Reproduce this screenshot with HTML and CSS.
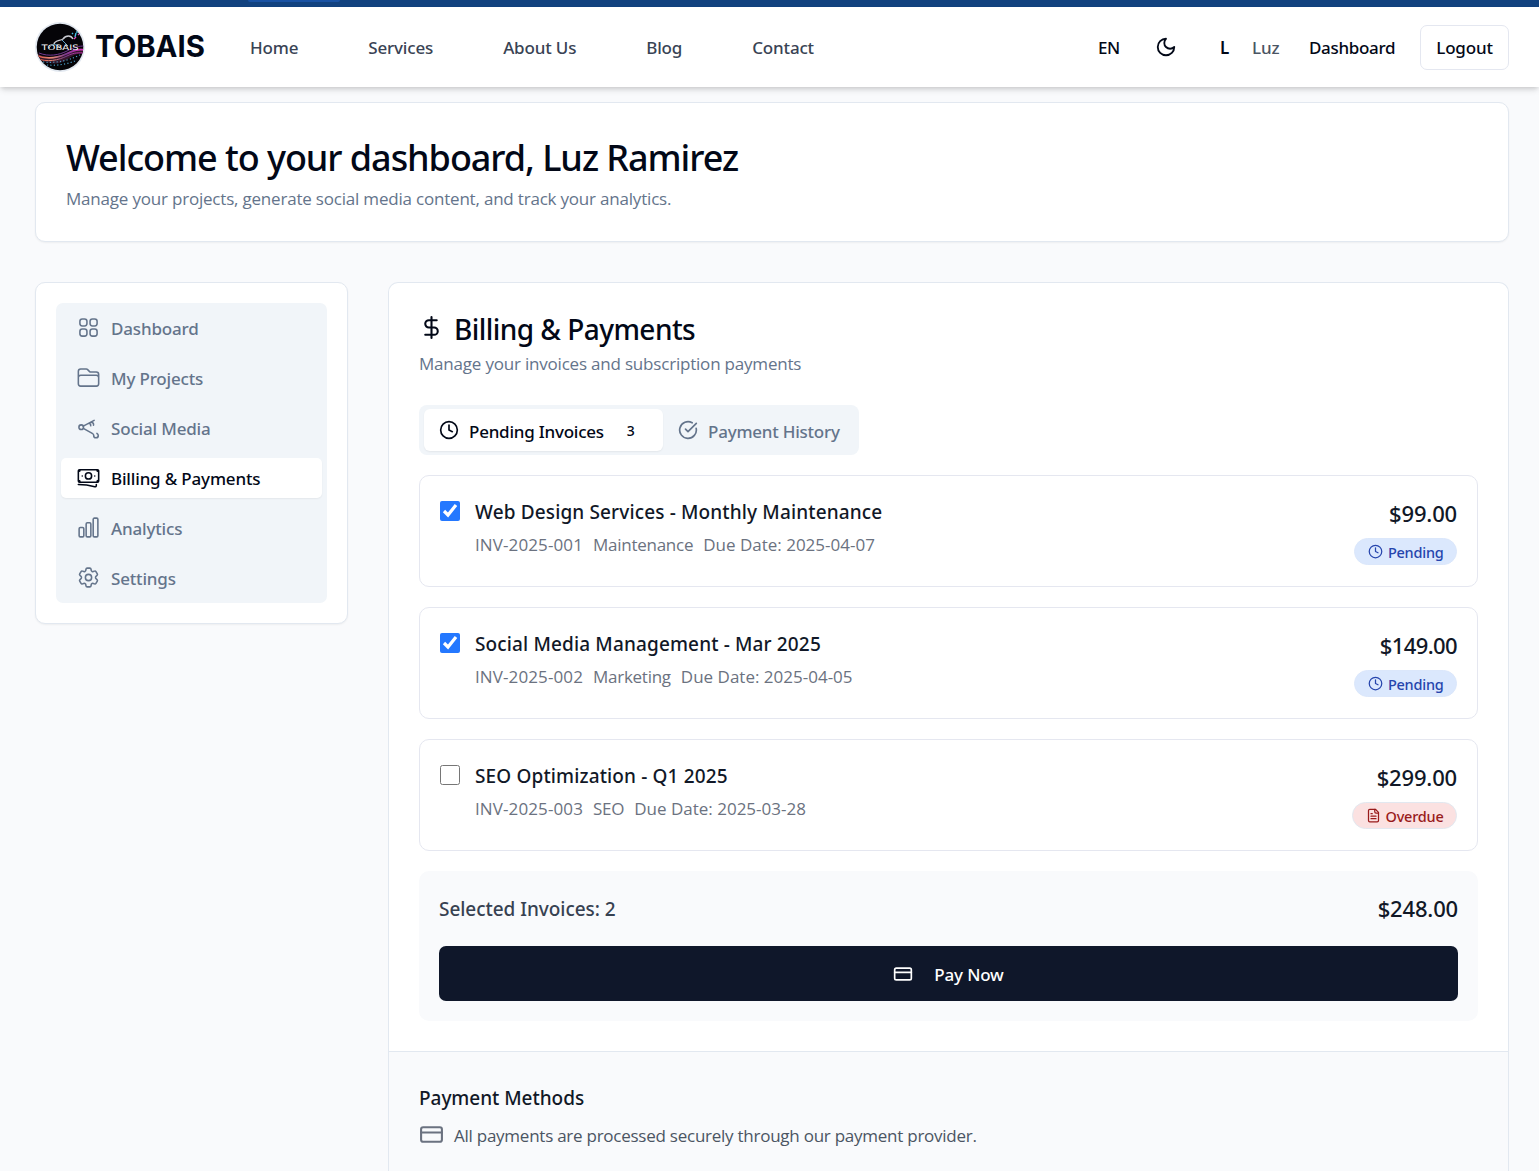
FILE: index.html
```html
<!DOCTYPE html>
<html lang="en">
<head>
<meta charset="utf-8">
<title>Dashboard - Billing &amp; Payments</title>
<link rel="stylesheet" href="styles.css">
</head>
<body>
<svg class="sprite" aria-hidden="true">
  <symbol id="i-clock" viewBox="0 0 24 24"><circle cx="12" cy="12" r="10"/><path d="M12 6v6l4 2"/></symbol>
  <symbol id="i-card" viewBox="0 0 24 24"><rect x="2" y="5" width="20" height="14" rx="2"/><path d="M2 10h20"/></symbol>
</svg>
<div class="topbar"><span class="topbar-pill"></span></div>
<header class="header">
  <a class="brand">
    <svg class="logo" viewBox="0 0 50 50">
      <defs>
        <clipPath id="disc"><circle cx="25" cy="25" r="23.3"/></clipPath>
        <linearGradient id="wave" x1="0" x2="1"><stop offset="0" stop-color="#d8503c"/><stop offset=".35" stop-color="#e58a78"/><stop offset=".6" stop-color="#7a3a8e"/><stop offset="1" stop-color="#e22bc0"/></linearGradient>
      </defs>
      <circle cx="25" cy="25" r="25" fill="#e2e8f0"/>
      <g clip-path="url(#disc)" fill="none">
        <rect width="50" height="50" fill="#050408"/>
        <path d="M0 29C10 39 22 35 31 31S44 25 50 27V31C40 30 36 36 27 40S8 39 0 36Z" fill="#35182c"/>
        <path d="M0 33C12 38 22 36 31 32S43 27 50 28" stroke="url(#wave)" stroke-width="1.6"/>
        <path d="M1 36C12 41 24 38 32 34S43 31 50 31" stroke="url(#wave)" stroke-width="1"/>
        <path d="M4 31C14 35 24 33 32 29S43 24 50 24" stroke="#7d3fa0" stroke-width=".9"/>
        <path d="M8 40C20 41 30 40 45 33M12 43C22 44 34 42 42 38" stroke="#4b9cc4" stroke-width="1.2" stroke-dasharray="1.2 2.2"/>
        <path d="M19 22C20 18 25 19 28 17C31 13 36 13 38 17" stroke="#c9cbd2" stroke-width="1.5"/>
        <path d="M14 26C17 21 22 22 25 26M27 18L33 24" stroke="#5fa5c8" stroke-width="1"/>
        <path d="M37 12l1-1M40 15l1-4M42 11v-2" stroke="#45c1e8" stroke-width="1.4"/>
        <path d="M39 17l2-2M43 13l1-1" stroke="#e04bbd" stroke-width="1.3"/>
      </g>
      <text class="logo-text" x="6.5" y="28" textLength="37" lengthAdjust="spacingAndGlyphs">TOBAIS</text>
    </svg>
    <span class="brand-name">TOBAIS</span>
  </a>
  <nav class="nav"><a>Home</a><a>Services</a><a>About Us</a><a>Blog</a><a>Contact</a></nav>
  <div class="actions">
    <span class="lang">EN</span>
    <svg class="icon moon" viewBox="0 0 24 24"><path d="M12 3a6 6 0 0 0 9 9 9 9 0 1 1-9-9Z"/></svg>
    <span class="initial">L</span>
    <span class="user">Luz</span>
    <a class="dash">Dashboard</a>
    <button class="logout">Logout</button>
  </div>
</header>

<div class="page">
  <section class="card welcome">
    <h1>Welcome to your dashboard, Luz Ramirez</h1>
    <p>Manage your projects, generate social media content, and track your analytics.</p>
  </section>

  <div class="columns">
    <aside class="card sidebar">
      <div class="menu">
        <a class="item"><svg class="hero" viewBox="0 0 24 24"><path d="M3.75 6A2.25 2.25 0 0 1 6 3.75h2.25A2.25 2.25 0 0 1 10.5 6v2.25a2.25 2.25 0 0 1-2.25 2.25H6a2.25 2.25 0 0 1-2.25-2.25V6ZM3.75 15.75A2.25 2.25 0 0 1 6 13.5h2.25a2.25 2.25 0 0 1 2.25 2.25V18a2.25 2.25 0 0 1-2.25 2.25H6A2.25 2.25 0 0 1 3.75 18v-2.25ZM13.5 6a2.25 2.25 0 0 1 2.25-2.25H18A2.25 2.25 0 0 1 20.25 6v2.25A2.25 2.25 0 0 1 18 10.5h-2.25a2.25 2.25 0 0 1-2.25-2.25V6ZM13.5 15.75a2.25 2.25 0 0 1 2.25-2.25H18a2.25 2.25 0 0 1 2.25 2.25V18A2.25 2.25 0 0 1 18 20.25h-2.25A2.25 2.25 0 0 1 13.5 18v-2.25Z"/></svg>Dashboard</a>
        <a class="item"><svg class="hero" viewBox="0 0 24 24"><path d="M2.25 12.75V12A2.25 2.25 0 0 1 4.5 9.75h15A2.25 2.25 0 0 1 21.75 12v.75m-8.69-6.44-2.12-2.12a1.5 1.5 0 0 0-1.061-.44H4.5A2.25 2.25 0 0 0 2.25 6v12a2.25 2.25 0 0 0 2.25 2.25h15A2.25 2.25 0 0 0 21.75 18V9a2.25 2.25 0 0 0-2.25-2.25h-5.379a1.5 1.5 0 0 1-1.06-.44Z"/></svg>My Projects</a>
        <a class="item"><svg class="hero" viewBox="0 0 24 24"><circle cx="5" cy="11.7" r="2.2"/><path d="M7 10.700 17.400 5.200M7 12.800 15.600 17.600c1.500.8 1.400 1.300 1.400 2a2.200 2.200 0 0 0 4.400.2c0-1.100-.5-1.700-1.300-2.100M12.200 8.200c1.500-.3 2 .6 1.900 2.200M15 7.200c1.500 0 2.100 1 1.800 2.600"/></svg>Social Media</a>
        <a class="item active"><svg class="hero" viewBox="0 0 24 24"><path d="M2.25 18.75a60.07 60.07 0 0 1 15.797 2.101c.727.198 1.453-.342 1.453-1.096V18.750M3.750 4.500v.75A.75.75 0 0 1 3 6h-.75m0 0v-.375c0-.621.504-1.125 1.125-1.125H20.250M2.250 6v9m18-10.500v.75c0 .414.336.75.75.75h.75m-1.500-1.500h.375c.621 0 1.125.504 1.125 1.125v9.750c0 .621-.504 1.125-1.125 1.125h-.375m1.500-1.500H21a.75.75 0 0 0-.75.75v.75m0 0H3.750m0 0h-.375a1.125 1.125 0 0 1-1.125-1.125V15m1.500 1.500v-.75A.75.75 0 0 0 3 15h-.75M15 10.500a3 3 0 1 1-6 0 3 3 0 0 1 6 0Zm3 0h.008v.008H18V10.500Zm-12 0h.008v.008H6V10.500Z"/></svg>Billing &amp; Payments</a>
        <a class="item"><svg class="hero" viewBox="0 0 24 24"><path d="M3 13.125C3 12.504 3.504 12 4.125 12h2.250c.621 0 1.125.504 1.125 1.125v6.750C7.500 20.496 6.996 21 6.375 21h-2.250A1.125 1.125 0 0 1 3 19.875v-6.750ZM9.750 8.625c0-.621.504-1.125 1.125-1.125h2.250c.621 0 1.125.504 1.125 1.125v11.250c0 .621-.504 1.125-1.125 1.125h-2.250a1.125 1.125 0 0 1-1.125-1.125V8.625ZM16.500 4.125c0-.621.504-1.125 1.125-1.125h2.250C20.496 3 21 3.504 21 4.125v15.750c0 .621-.504 1.125-1.125 1.125h-2.250a1.125 1.125 0 0 1-1.125-1.125V4.125Z"/></svg>Analytics</a>
        <a class="item"><svg class="hero" viewBox="0 0 24 24"><path d="M9.594 3.940c.090-.542.560-.940 1.110-.940h2.593c.550 0 1.020.398 1.110.940l.213 1.281c.063.374.313.686.645.870.074.040.147.083.220.127.325.196.720.257 1.075.124l1.217-.456a1.125 1.125 0 0 1 1.370.490l1.296 2.247a1.125 1.125 0 0 1-.260 1.431l-1.003.827c-.293.241-.438.613-.430.992a7.723 7.723 0 0 1 0 .255c-.008.378.137.750.430.991l1.004.827c.424.350.534.955.260 1.430l-1.298 2.247a1.125 1.125 0 0 1-1.369.491l-1.217-.456c-.355-.133-.750-.072-1.076.124a6.470 6.470 0 0 1-.220.128c-.331.183-.581.495-.644.869l-.213 1.281c-.090.543-.560.940-1.110.940h-2.594c-.550 0-1.019-.398-1.110-.940l-.213-1.281c-.062-.374-.312-.686-.644-.870a6.520 6.520 0 0 1-.220-.127c-.325-.196-.720-.257-1.076-.124l-1.217.456a1.125 1.125 0 0 1-1.369-.490l-1.297-2.247a1.125 1.125 0 0 1 .260-1.431l1.004-.827c.292-.240.437-.613.430-.991a6.932 6.932 0 0 1 0-.255c.007-.380-.138-.751-.430-.992l-1.004-.827a1.125 1.125 0 0 1-.260-1.430l1.297-2.247a1.125 1.125 0 0 1 1.370-.491l1.216.456c.356.133.751.072 1.076-.124.072-.044.146-.086.220-.128.332-.183.582-.495.644-.869l.214-1.280Z"/><path d="M15 12a3 3 0 1 1-6 0 3 3 0 0 1 6 0Z"/></svg>Settings</a>
      </div>
    </aside>

    <main class="card main">
      <div class="content">
        <h2><svg class="icon dollar" viewBox="0 0 24 24"><path d="M12 2v20M17 5H9.500a3.500 3.500 0 0 0 0 7h5a3.500 3.500 0 0 1 0 7H6"/></svg>Billing &amp; Payments</h2>
        <p class="lead">Manage your invoices and subscription payments</p>

        <div class="tabs">
          <div class="tab on"><svg class="icon"><use href="#i-clock"/></svg><span>Pending Invoices</span><b class="count">3</b></div>
          <div class="tab"><svg class="icon" viewBox="0 0 24 24"><path d="M21.801 10A10 10 0 1 1 17 3.335"/><path d="m9 11 3 3L22 4"/></svg><span>Payment History</span></div>
        </div>

        <div class="invoices">
          <article class="invoice">
            <input type="checkbox" checked>
            <div class="info"><h3>Web Design Services - Monthly Maintenance</h3><div class="meta"><span>INV-2025-001</span><span class="cat">Maintenance</span><span>Due Date: 2025-04-07</span></div></div>
            <div class="amount"><strong>$99.00</strong><span class="pill pending"><svg class="icon"><use href="#i-clock"/></svg>Pending</span></div>
          </article>
          <article class="invoice">
            <input type="checkbox" checked>
            <div class="info"><h3>Social Media Management - Mar 2025</h3><div class="meta"><span>INV-2025-002</span><span class="cat">Marketing</span><span>Due Date: 2025-04-05</span></div></div>
            <div class="amount"><strong class="narrow">$149.00</strong><span class="pill pending"><svg class="icon"><use href="#i-clock"/></svg>Pending</span></div>
          </article>
          <article class="invoice">
            <input type="checkbox">
            <div class="info"><h3>SEO Optimization - Q1 2025</h3><div class="meta"><span>INV-2025-003</span><span class="cat">SEO</span><span>Due Date: 2025-03-28</span></div></div>
            <div class="amount"><strong>$299.00</strong><span class="pill overdue"><svg class="icon" viewBox="0 0 24 24"><path d="M15 2H6a2 2 0 0 0-2 2v16a2 2 0 0 0 2 2h12a2 2 0 0 0 2-2V7Z"/><path d="M14 2v4a2 2 0 0 0 2 2h4M10 9H8M16 13H8M16 17H8"/></svg>Overdue</span></div>
          </article>
        </div>

        <div class="summary">
          <div class="total"><span>Selected Invoices: 2</span><strong>$248.00</strong></div>
          <button class="pay"><svg class="icon"><use href="#i-card"/></svg>Pay Now</button>
        </div>
      </div>
      <footer class="methods">
        <h3>Payment Methods</h3>
        <p><svg class="icon"><use href="#i-card"/></svg>All payments are processed securely through our payment provider.</p>
      </footer>
    </main>
  </div>
</div>
</body>
</html>
```
FILE: styles.css
```css
* { box-sizing: border-box; margin: 0; padding: 0; }
body {
  background: #f9fafc;
  color: #020817;
  font: 500 17px/25px "Noto Sans", "Open Sans", sans-serif;
  letter-spacing: -0.17px;
}
.sprite { display: none; }
.icon, .hero {
  flex: none;
  fill: none;
  stroke: currentColor;
  stroke-width: 2;
  stroke-linecap: round;
  stroke-linejoin: round;
}
.hero { width: 25px; height: 25px; stroke-width: 1.5; }
button { font: inherit; letter-spacing: inherit; color: inherit; }

/* Top strip and header */
.topbar { height: 7px; padding-left: 248px; background: #12427f; }
.topbar-pill { display: block; width: 92px; height: 2px; border-radius: 0 0 6px 6px; background: #1952a3; }
.header {
  display: flex;
  align-items: center;
  height: 80px;
  padding: 0 30px 0 35px;
  background: #fff;
  box-shadow: 0 4px 6px -1px rgba(0, 0, 0, .12), 0 2px 4px -1px rgba(0, 0, 0, .1);
}
.brand { display: flex; align-items: center; width: 215px; gap: 10px; }
.logo { width: 50px; height: 50px; }
.logo-text { fill: #fff; font: 400 7.500px "DejaVu Sans", sans-serif; letter-spacing: 0; }
.brand-name { margin-top: -2px; font: 700 29.300px/35px Inter, sans-serif; letter-spacing: 0; }
.nav { display: flex; gap: 70px; color: #394354; }
.actions { display: flex; align-items: center; margin-left: auto; padding-top: 1px; }
.lang { letter-spacing: -.3px; }
.moon { width: 22px; height: 22px; margin: -2px 43px 0 35px; }
.initial { width: 32px; font-weight: 600; }
.user { width: 57px; color: #4b5563; }
.dash { width: 111px; letter-spacing: -.33px; }
.logout { width: 89px; height: 45px; border: 1px solid #e4e7f0; border-radius: 7px; background: #fff; }

/* Page layout */
.page { padding: 15px 30px 0 35px; }
.card { border: 1px solid #e2e8f0; border-radius: 10px; background: #fff; box-shadow: 0 1px 2px rgba(0, 0, 0, .05); }
.welcome { height: 140px; padding: 31px 30px 0; }
.welcome h1 { font-size: 36px; line-height: 47px; font-weight: 500; letter-spacing: -1.05px; }
.welcome p, .lead, .meta, .methods p { font-family: "Open Sans", "Noto Sans", sans-serif; font-weight: 400; letter-spacing: -.2px; }
.welcome p, .lead { color: #64748b; }
.welcome p { margin-top: 5px; }
.columns { display: grid; grid-template-columns: 313px 1fr; gap: 40px; align-items: start; margin-top: 40px; }

/* Side menu */
.sidebar { height: 342px; padding: 20px; }
.menu { display: flex; flex-direction: column; gap: 10px; height: 300px; padding: 5px; border-radius: 7px; background: #f1f5f9; }
.item { display: flex; align-items: center; gap: 10px; height: 40px; padding-left: 15px; border-radius: 5px; color: #64748b; }
.item .hero { margin-top: -2px; }
.item.active { background: #fff; color: #020817; box-shadow: 0 1px 2px rgba(0, 0, 0, .06); }

/* Billing panel */
.main { height: 889px; border-bottom: 0; border-radius: 10px 10px 0 0; box-shadow: none; }
.content { height: 768px; padding: 27px 30px 0; }
h2 { display: flex; align-items: center; gap: 10px; height: 38px; font-size: 28px; line-height: 38px; font-weight: 500; letter-spacing: -.55px; }
.dollar { width: 25px; height: 25px; margin-top: -3px; }
.lead { margin-top: 3px; }
.tabs { display: flex; width: 440px; height: 50px; margin-top: 29px; padding: 4px 5px; border-radius: 8px; background: #f1f5f9; }
.tab { display: flex; flex: none; align-items: center; gap: 10px; height: 42px; padding: 2px 15px 0; border-radius: 6px; color: #64748b; letter-spacing: -.23px; white-space: nowrap; }
.tab .icon { width: 20px; height: 20px; margin-top: -3px; }
.tab.on { width: 239px; background: #fff; color: #020817; box-shadow: 0 1px 2px rgba(0, 0, 0, .06); }
.count { margin: -1px 0 0 13px; font-size: 14px; font-weight: 500; }
.invoices { display: flex; flex-direction: column; gap: 20px; margin-top: 20px; }
.invoice { display: flex; height: 112px; padding: 24px 20px 0; border: 1px solid #e5e7f0; border-radius: 10px; }
.invoice input { width: 20px; height: 20px; margin: 1px 15px 0 0; accent-color: #2478ff; }
.invoice h3, .methods h3 { color: #111827; font-size: 19px; line-height: 25px; font-weight: 500; letter-spacing: .14px; }
.meta { display: flex; gap: 10px; margin-top: 7px; color: #6b7280; letter-spacing: 0; }
.meta span:first-child { letter-spacing: .11px; }
.meta .cat { letter-spacing: -.26px; }
.amount { display: flex; flex-direction: column; align-items: flex-end; margin: -2px 0 0 auto; }
.amount strong, .total strong { color: #111827; font-size: 22px; line-height: 30px; font-weight: 500; letter-spacing: -.17px; }
.amount .narrow { letter-spacing: -.6px; }
.pill { display: flex; align-items: center; gap: 5px; height: 27px; margin-top: 10px; padding: 1px 12.500px 0; border: 1px solid #e2e8f0; border-radius: 14px; font-size: 14.500px; letter-spacing: -.24px; }
.pill .icon { width: 15px; height: 15px; margin-top: -2px; }
.pending { border-color: #dbe7fb; background: #dbe8fd; color: #2645ad; }
.overdue { background: #fbe1e1; color: #991b1b; }
.summary { height: 150px; margin-top: 20px; padding: 22px 20px 0; border-radius: 10px; background: #f9fafc; }
.total { display: flex; justify-content: space-between; align-items: center; height: 30px; color: #374151; font-size: 19px; letter-spacing: -.04px; }
.total span { padding-top: 3px; }
.pay { display: flex; align-items: center; justify-content: center; gap: 21px; width: 100%; height: 55px; margin-top: 23px; padding-top: 1px; border: 0; border-radius: 7px; background: #0f172a; color: #fff; }
.pay .icon { width: 20px; height: 20px; margin-top: -1px; }
.methods { height: 120px; padding: 34px 30px 0; border-top: 1px solid #e2e8f0; background: #f9fafc; }
.methods h3 { letter-spacing: -.04px; }
.methods p { display: flex; align-items: center; gap: 10px; margin-top: 12px; color: #4b5563; letter-spacing: -.25px; }
.methods .icon { width: 25px; height: 25px; margin-top: -3px; color: #6b7280; }
```
